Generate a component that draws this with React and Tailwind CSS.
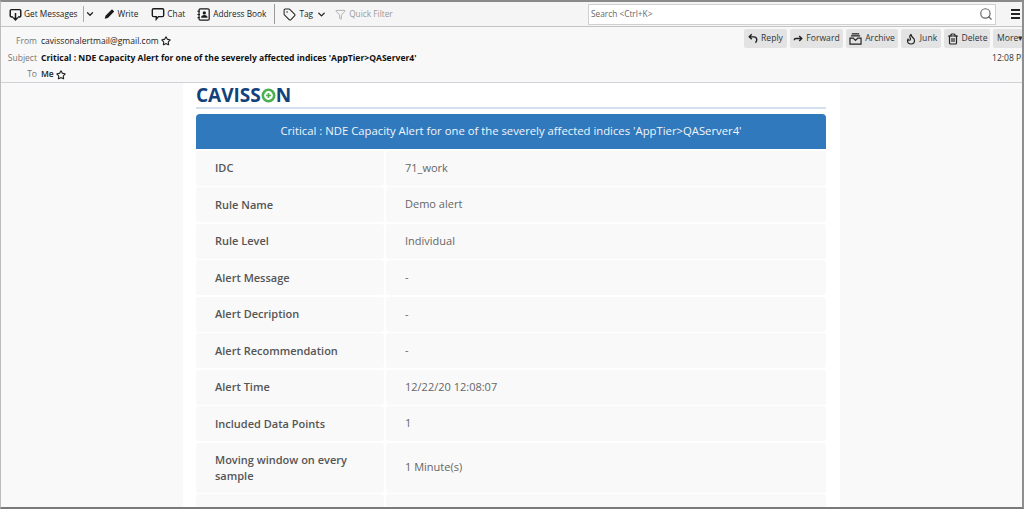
import React from 'react';
import { ChevronDown, Filter, Flame, Search, Star, Tag, Trash2 } from 'lucide-react';

const chromeFont = "font-['Open_Sans','Noto_Sans',sans-serif]";

const GetMessagesIcon = () => (
  <svg width="13" height="15" viewBox="0 0 16 16" fill="none" stroke="#1a1a1a" strokeWidth="1.8">
    <path d="M5 11H3a1.5 1.5 0 0 1-1.5-1.5v-6A1.5 1.5 0 0 1 3 2h10a1.5 1.5 0 0 1 1.5 1.5v6A1.5 1.5 0 0 1 13 11h-2" />
    <path d="M8 6v9M5.2 11.8 8 14.8l2.8-3" />
  </svg>
);

const PencilIcon = () => (
  <svg width="11" height="12" viewBox="0 0 16 16" fill="#1a1a1a">
    <path d="M1 15l1.2-4.6L10.8 1.8a1.2 1.2 0 0 1 1.7 0l1.7 1.7a1.2 1.2 0 0 1 0 1.7L5.6 13.8z" />
  </svg>
);

const ChatIcon = () => (
  <svg width="14" height="14" viewBox="0 0 16 16" fill="none" stroke="#1a1a1a" strokeWidth="1.6">
    <path d="M3 2h10a1.5 1.5 0 0 1 1.5 1.5v6A1.5 1.5 0 0 1 13 11H8.5L6 14v-3H3a1.5 1.5 0 0 1-1.5-1.5v-6A1.5 1.5 0 0 1 3 2z" />
  </svg>
);

const AddressBookIcon = () => (
  <svg width="13" height="13" viewBox="0 0 16 16" fill="none" stroke="#1a1a1a" strokeWidth="1.5">
    <rect x="2.5" y="1" width="12.5" height="14" rx="1.5" />
    <path d="M0.5 4h3M0.5 8h3M0.5 12h3" />
    <circle cx="9" cy="6" r="2" fill="#1a1a1a" stroke="none" />
    <path d="M5 12c0-2.5 1.6-3.5 4-3.5s4 1 4 3.5z" fill="#1a1a1a" stroke="none" />
  </svg>
);

const ReplyIcon = () => (
  <svg width="10" height="11" viewBox="0 0 12 12" fill="none" stroke="#222" strokeWidth="1.7">
    <path d="M4.5 1 1.5 4l3 3M1.5 4H7a3.5 3.5 0 0 1 3.5 3.5c0 1.5-.5 2.5-1.5 3.5" />
  </svg>
);

const ForwardIcon = () => (
  <svg width="10" height="11" viewBox="0 0 12 12" fill="none" stroke="#222" strokeWidth="1.7">
    <path d="M7.5 3 10.5 6l-3 3M10.5 6H3.5c-1 0-2 .6-2 2" />
  </svg>
);

const ArchiveIcon = () => (
  <svg width="13" height="12" viewBox="0 0 14 13" fill="none" stroke="#222" strokeWidth="1.3">
    <path d="M3 1h8M2 3.2h10" />
    <path d="M1 5.5h3.5L7 8l2.5-2.5H13v6.5H1z" />
  </svg>
);

const HeaderButton = ({ icon, label, className }) => (
  <div className={`flex h-[19px] shrink-0 items-center justify-center gap-[3px] rounded-[2px] bg-[#e3e3e3] text-[8.6px] text-[#333] ${className}`}>
    {icon}
    <span>{label}</span>
  </div>
);

const ToolItem = ({ icon, label, className = '', gap = 'gap-[2px]' }) => (
  <div className={`flex items-center text-[8.3px] text-[#222] ${gap} ${className}`}>
    {icon}
    <span>{label}</span>
  </div>
);

const MailStar = () => <Star className="h-[10px] w-[10px] shrink-0 text-[#222]" strokeWidth={2.6} />;

const rows = [
  ['IDC', '71_work'],
  ['Rule Name', 'Demo alert'],
  ['Rule Level', 'Individual'],
  ['Alert Message', '-'],
  ['Alert Decription', '-'],
  ['Alert Recommendation', '-'],
  ['Alert Time', '12/22/20 12:08:07'],
  ['Included Data Points', '1'],
];

const Row = ({ label, value, tall }) => (
  <div className={`flex shrink-0 gap-[2px] ${tall ? 'h-[50px]' : 'h-[35px]'}`}>
    <div className="flex w-[188px] items-center rounded-[3px] bg-[#f9f9f9] pl-[19px] pr-[16px] text-[11px] font-semibold leading-[16px] text-[#555]">
      {label}
    </div>
    <div className="flex flex-1 items-center rounded-[3px] bg-[#f9f9f9] pl-[19px] text-[11px] text-[#666]">
      {value}
    </div>
  </div>
);

export default function App() {
  return (
    <div className={`flex h-[509px] w-[1024px] flex-col overflow-hidden border-t-2 border-b-2 border-r-2 border-l border-t-[#8a8a8a] border-b-[#7a7a7a] border-r-[#8f8f8f] border-l-[#bdbdbd] bg-white ${chromeFont}`}>
      {/* Toolbar */}
      <div className="flex h-[25px] shrink-0 items-center border-b border-[#c4c4c4] bg-[#f5f5f5]">
        <div className="flex h-full items-center pl-[8px]">
          <ToolItem icon={<GetMessagesIcon />} label="Get Messages" />
          <div className="ml-[5px] flex h-[16px] items-center border-l border-[#aaa] pl-[1px]">
            <ChevronDown className="h-[10px] w-[10px] text-[#222]" strokeWidth={3} />
          </div>
          <ToolItem icon={<PencilIcon />} label="Write" className="ml-[9px]" gap="gap-[3px]" />
          <ToolItem icon={<ChatIcon />} label="Chat" className="ml-[13px]" />
          <ToolItem icon={<AddressBookIcon />} label="Address Book" className="ml-[12px]" gap="gap-[3px]" />
        </div>
        <div className="ml-[8px] h-[20px] border-l border-[#999]" />
        <ToolItem icon={<Tag className="h-[13px] w-[13px] text-[#222]" strokeWidth={1.9} />} label="Tag" className="ml-[8px]" gap="gap-[3px]" />
        <ChevronDown className="ml-[3px] h-[11px] w-[11px] text-[#222]" strokeWidth={3} />
        <ToolItem icon={<Filter className="h-[11px] w-[11px] text-[#aaa]" />} label="Quick Filter" className="ml-[8px] !text-[#999]" gap="gap-[3px]" />
        <div className="ml-auto flex h-[21px] w-[408px] items-center justify-between border border-[#d0d0d0] bg-white pl-[2px] pr-[2px] text-[8.3px] text-[#666]">
          <span>Search &lt;Ctrl+K&gt;</span>
          <Search className="h-[14px] w-[14px] text-[#666]" strokeWidth={2} />
        </div>
        <div className="ml-[15px] mr-[2px] flex w-[9px] flex-col gap-[2px]">
          <div className="h-[2px] bg-[#222]" />
          <div className="h-[2px] bg-[#222]" />
          <div className="h-[2px] bg-[#222]" />
        </div>
      </div>

      {/* Message header */}
      <div className="flex h-[56px] shrink-0 border-b border-[#cfd3d8] bg-[#f8f8f8] text-[8.55px]">
        <div className="flex flex-col pt-[5px]">
          <div className="flex h-[20px] items-center">
            <span className="w-[36px] text-right text-[#777]">From</span>
            <span className="ml-[4px] text-[#222]">cavissonalertmail@gmail.com</span>
            <span className="ml-[2px]"><MailStar /></span>
          </div>
          <div className="flex h-[18px] items-center">
            <span className="w-[36px] text-right text-[#777]">Subject</span>
            <span className="ml-[4px] whitespace-nowrap font-bold text-[#111]">Critical : NDE Capacity Alert for one of the severely affected indices 'AppTier&gt;QAServer4'</span>
          </div>
          <div className="flex h-[16px] items-center">
            <span className="w-[36px] text-right text-[#777]">To</span>
            <span className="ml-[4px] font-semibold text-[#222]">Me</span>
            <span className="ml-[2px]"><MailStar /></span>
          </div>
        </div>
        <div className="ml-auto flex flex-col items-end overflow-hidden pt-[2px]">
          <div className="flex w-[278px] gap-[3px] overflow-hidden">
            <HeaderButton icon={<ReplyIcon />} label="Reply" className="w-[43px]" />
            <HeaderButton icon={<ForwardIcon />} label="Forward" className="w-[53px]" />
            <HeaderButton icon={<ArchiveIcon />} label="Archive" className="w-[52px]" />
            <HeaderButton icon={<Flame className="h-[12px] w-[12px] text-[#222]" strokeWidth={2.4} />} label="Junk" className="w-[40px]" />
            <HeaderButton icon={<Trash2 className="h-[12px] w-[12px] text-[#222]" strokeWidth={2.4} />} label="Delete" className="w-[46px]" />
            <div className="flex h-[19px] shrink-0 items-center rounded-[2px] bg-[#e3e3e3] pl-[4px] text-[8.6px] text-[#333]">More▾</div>
          </div>
          <span className="mt-[4px] w-[30px] overflow-hidden whitespace-nowrap text-[#333]">12:08 PM</span>
        </div>
      </div>

      {/* Mail body */}
      <div className="flex min-h-0 flex-1 justify-center overflow-hidden bg-[#f9f9f9]">
        <div className="flex w-[657px] shrink-0 flex-col bg-white pl-[13px] pr-[14px] pt-[2px]">
          <div className="flex h-[20px] shrink-0 items-center">
            <span className="flex items-center text-[19px] font-bold leading-none text-[#12427a]">
              CAVISS
              <svg width="15" height="15" viewBox="0 0 14 14">
                <circle cx="7" cy="7" r="5.3" fill="none" stroke="#4caf50" strokeWidth="2.4" />
                <path d="M7 4.6v4.8M4.6 7h4.8" stroke="#4caf50" strokeWidth="1.6" />
              </svg>
              N
            </span>
          </div>
          <div className="mt-[2px] h-[2px] shrink-0 bg-[#d3e0ee]" />
          <div className="mt-[5px] flex h-[35px] shrink-0 items-center justify-center rounded-t-[4px] bg-[#3079bd] text-[11.3px] text-[#f0f5fa]">
            Critical : NDE Capacity Alert for one of the severely affected indices 'AppTier&gt;QAServer4'
          </div>
          <div className="mt-[1.5px] flex shrink-0 flex-col gap-[1.5px]">
            {rows.map(([label, value]) => (
              <Row key={label} label={label} value={value} />
            ))}
            <Row label="Moving window on every sample" value="1 Minute(s)" tall />
            <Row label="" value="" />
          </div>
        </div>
      </div>
    </div>
  );
}
